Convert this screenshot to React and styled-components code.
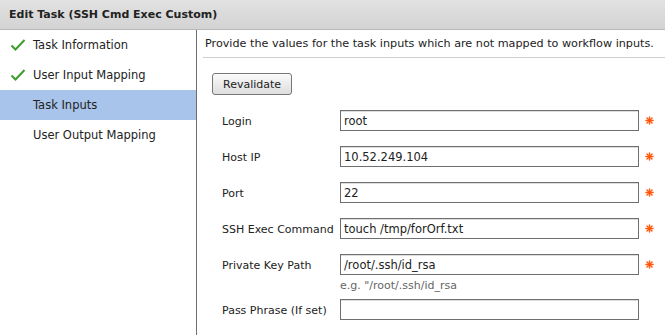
import React from 'react';
import styled, { createGlobalStyle } from 'styled-components';

const GlobalStyle = createGlobalStyle`
  body {
    margin: 0;
    background: #fff;
    font-family: "DejaVu Sans", Verdana, sans-serif;
    font-size: 11px;
    color: #222;
  }
`;

const Window = styled.div`
  width: 665px;
  height: 335px;
  overflow: hidden;
  display: flex;
  flex-direction: column;
`;

const TitleBar = styled.div`
  height: 29px;
  flex-shrink: 0;
  display: flex;
  align-items: center;
  padding-left: 9px;
  background: linear-gradient(#e2e2e2, #d3d3d3);
  border-bottom: 1px solid #b8b8b8;
  font-weight: bold;
  font-size: 11px;
  color: #222;
`;

const Body = styled.div`
  flex: 1;
  display: flex;
`;

const Sidebar = styled.div`
  width: 196px;
  flex-shrink: 0;
  border-right: 1px solid #6e6e6e;
`;

const NavItem = styled.div`
  height: 30px;
  display: flex;
  align-items: center;
  padding-left: 10px;
  font-size: 11.5px;
  background: ${(p) => (p.$active ? '#a8c4ea' : 'transparent')};
`;

const CheckSlot = styled.span`
  width: 23px;
  display: flex;
  align-items: center;
`;

const Content = styled.div`
  flex: 1;
  padding-left: 6px;
`;

const Intro = styled.div`
  height: 27px;
  display: flex;
  align-items: center;
  padding-left: 2px;
  font-size: 11.2px;
  white-space: nowrap;
  border-bottom: 1px solid #cfcfcf;
`;

const Form = styled.div`
  padding: 15px 0 0 9px;
`;

const Button = styled.button`
  height: 22px;
  padding: 0 10px;
  font-family: inherit;
  font-size: 11px;
  color: #222;
  border: 1px solid #777;
  border-radius: 3px;
  background: linear-gradient(#fafafa, #dedede);
  margin-bottom: 15px;
`;

const Row = styled.div`
  display: flex;
  align-items: center;
  height: 21px;
  margin-bottom: 15px;
  padding-left: 10px;
`;

const Label = styled.div`
  width: 118px;
  flex-shrink: 0;
  white-space: nowrap;
  padding-top: 1px;
`;

const Input = styled.div`
  width: 294px;
  height: 19px;
  flex-shrink: 0;
  border: 1px solid #6f6f6f;
  box-shadow: inset 0 1px 0 #ddd;
  display: flex;
  align-items: center;
  padding-left: 3px;
  font-size: 11.5px;
  color: #222;
`;

const Required = styled.span`
  margin-left: 6px;
  display: flex;
`;

const Hint = styled.div`
  padding-left: 128px;
  margin: -11px 0 7px;
  color: #666;
`;

function Check() {
  return (
    <svg width="16" height="14" viewBox="0 0 16 14">
      <path d="M1.5 7.5 L5.5 11.5 L14.5 2" fill="none" stroke="#3d9c2e" strokeWidth="2" />
    </svg>
  );
}

function Star() {
  return (
    <svg width="9" height="9" viewBox="0 0 10 10">
      <g stroke="#ff5a10" strokeWidth="1.6" strokeLinecap="round">
        <line x1="5" y1="1" x2="5" y2="9" />
        <line x1="1" y1="5" x2="9" y2="5" />
        <line x1="2.2" y1="2.2" x2="7.8" y2="7.8" />
        <line x1="7.8" y1="2.2" x2="2.2" y2="7.8" />
      </g>
    </svg>
  );
}

const nav = [
  { label: 'Task Information', done: true },
  { label: 'User Input Mapping', done: true },
  { label: 'Task Inputs', active: true },
  { label: 'User Output Mapping' },
];

export default function App() {
  return (
    <Window>
      <GlobalStyle />
      <TitleBar>Edit Task (SSH Cmd Exec Custom)</TitleBar>
      <Body>
        <Sidebar>
          {nav.map((n) => (
            <NavItem key={n.label} $active={n.active}>
              <CheckSlot>{n.done && <Check />}</CheckSlot>
              {n.label}
            </NavItem>
          ))}
        </Sidebar>
        <Content>
          <Intro>Provide the values for the task inputs which are not mapped to workflow inputs.</Intro>
          <Form>
            <Button>Revalidate</Button>
            <Row>
              <Label>Login</Label>
              <Input>root</Input>
              <Required><Star /></Required>
            </Row>
            <Row>
              <Label>Host IP</Label>
              <Input>10.52.249.104</Input>
              <Required><Star /></Required>
            </Row>
            <Row>
              <Label>Port</Label>
              <Input>22</Input>
              <Required><Star /></Required>
            </Row>
            <Row>
              <Label>SSH Exec Command</Label>
              <Input>touch /tmp/forOrf.txt</Input>
              <Required><Star /></Required>
            </Row>
            <Row>
              <Label>Private Key Path</Label>
              <Input>/root/.ssh/id_rsa</Input>
              <Required><Star /></Required>
            </Row>
            <Hint>e.g. "/root/.ssh/id_rsa</Hint>
            <Row>
              <Label>Pass Phrase (If set)</Label>
              <Input />
            </Row>
          </Form>
        </Content>
      </Body>
    </Window>
  );
}
